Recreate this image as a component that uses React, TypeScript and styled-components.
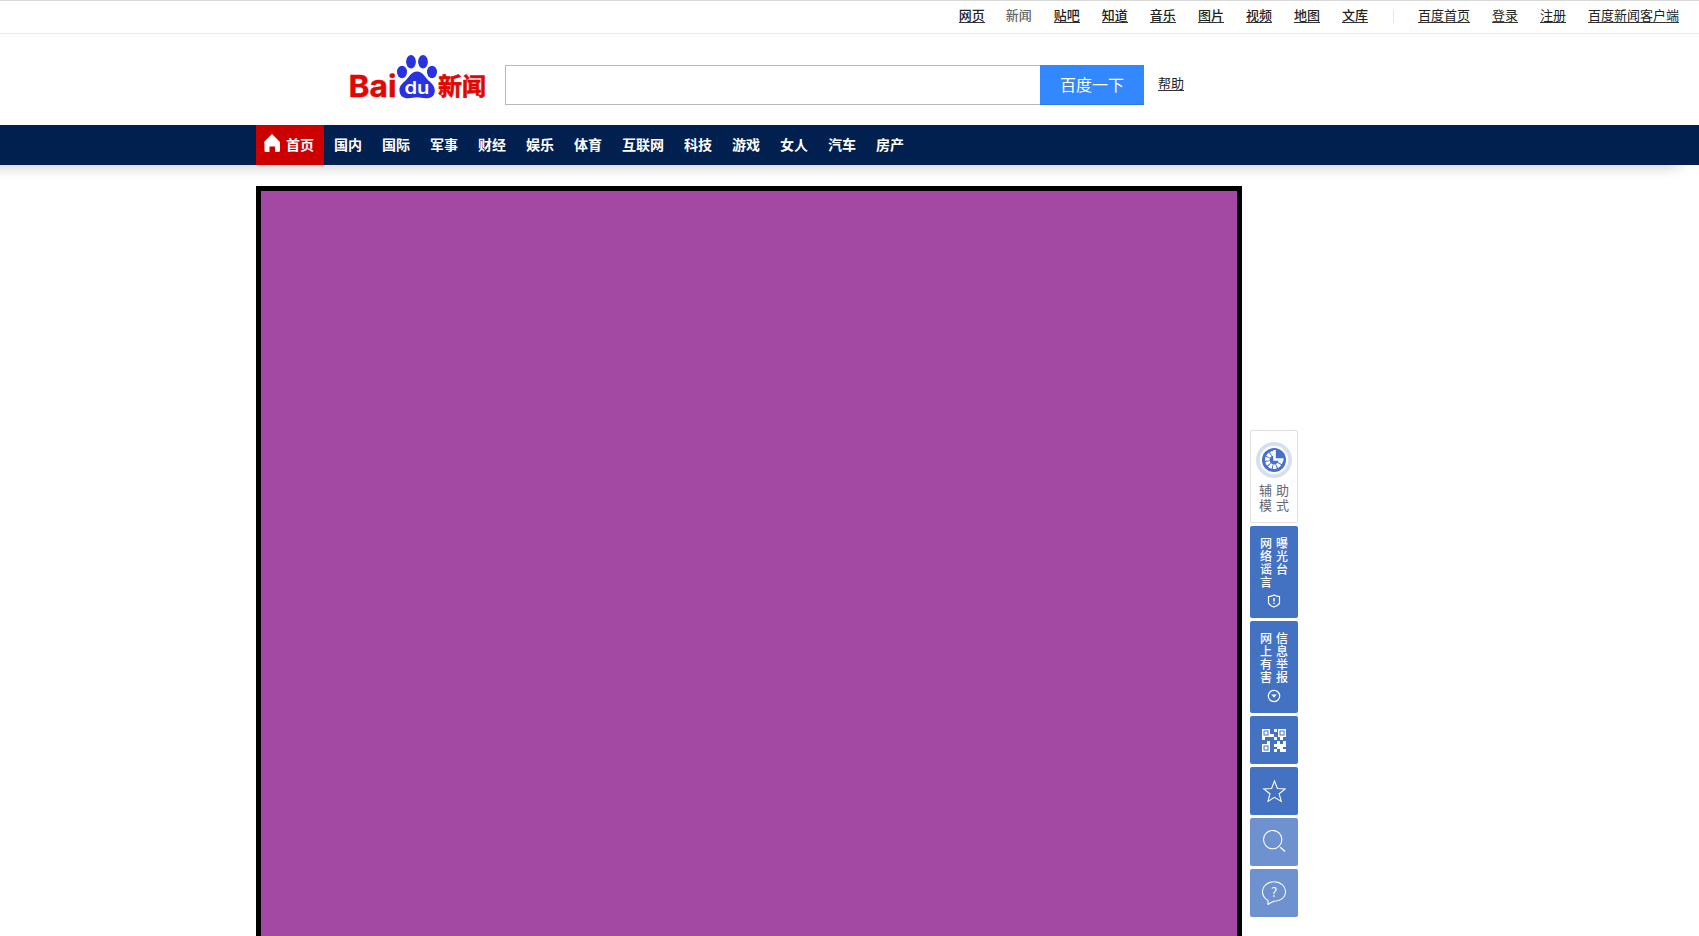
import React from "react";
import styled, { createGlobalStyle, css } from "styled-components";

const sans = `"Noto Sans CJK SC", sans-serif`;

const GlobalStyle = createGlobalStyle`
  body {
    margin: 0;
    background: #fff;
    color: #333;
    font: 13px/1 ${sans};
    overflow: hidden;
  }
  a { color: inherit; }
`;

const Page = styled.div`
  height: 936px;
  overflow: hidden;
  display: flex;
  flex-direction: column;
`;

const TopBar = styled.div`
  box-sizing: border-box;
  flex: none;
  height: 34px;
  padding: 0 20px 2px 0;
  border-top: 1px solid #d9d9d9;
  border-bottom: 1px solid #ebebeb;
  display: flex;
  justify-content: flex-end;
  align-items: center;
  gap: 22px;
`;

const TopLink = styled.a<{ $weight?: number; $current?: boolean }>`
  height: 14px;
  line-height: 11px;
  box-sizing: border-box;
  white-space: nowrap;
  font-weight: ${(p) => p.$weight ?? 400};
  color: ${(p) => (p.$current ? "#666" : "#222")};
  border-bottom: 1px solid ${(p) => (p.$current ? "transparent" : "#333")};
  &:first-child { margin-right: -1px; }
`;

const Divider = styled.span`
  width: 1px;
  height: 13px;
  margin: 0 2px 0 3px;
  background: #e6e6e6;
`;

const Header = styled.header`
  flex: none;
  height: 91px;
  box-sizing: border-box;
  padding: 21px 0 0 350px;
  display: flex;
  align-items: flex-start;
`;

const Logo = styled.svg`
  width: 136px;
  height: 46px;
  margin-right: 19px;
  overflow: visible;
`;

const SearchForm = styled.div`
  display: flex;
  align-items: center;
  margin-top: 10px;
`;

const SearchInput = styled.input`
  box-sizing: border-box;
  width: 535px;
  height: 40px;
  padding: 0 10px;
  border: 1px solid #b8b8b8;
  border-right: 0;
  border-radius: 0;
  outline: 0;
  font: 16px ${sans};
`;

const SearchButton = styled.button`
  width: 104px;
  height: 40px;
  padding: 0 0 2px;
  border: 0;
  border-bottom: 1px solid #2d78e0;
  background: #3388ff;
  color: #fff;
  font: 16px/1 ${sans};
`;

const HelpLink = styled(TopLink)`
  margin: 0 0 2px 14px;
`;

const Nav = styled.nav`
  flex: none;
  height: 40px;
  padding-left: 256px;
  display: flex;
  background: #01204f;
  box-shadow: -20px 2px 14px rgba(0, 0, 0, 0.2);
  clip-path: inset(0 0 -20px 0);
`;

const NavItem = styled.a<{ $active?: boolean }>`
  display: flex;
  align-items: center;
  padding: 0 10px 2px;
  color: #fff;
  font-size: 14px;
  font-weight: 700;
  white-space: nowrap;
  ${(p) =>
    p.$active &&
    css`
      width: 68px;
      box-sizing: border-box;
      padding: 0 0 2px 8px;
      gap: 6px;
      background: #cc0000;
    `}
`;

const HomeIcon = styled.svg`
  flex: none;
  width: 16px;
  height: 18px;
  margin-bottom: 2px;
`;

const Main = styled.main`
  display: flex;
  gap: 8px;
  padding: 21px 0 0 256px;
`;

const Panel = styled.section`
  box-sizing: border-box;
  flex: none;
  width: 986px;
  height: 900px;
  border: 5px solid #000;
  background: #a349a4;
`;

const Tools = styled.aside`
  display: flex;
  flex-direction: column;
  gap: 3px;
  padding-top: 244px;
  width: 48px;
`;

const AssistTile = styled.div`
  box-sizing: border-box;
  height: 93px;
  padding-top: 11px;
  border: 1px solid #e2e2e2;
  border-radius: 2px;
  background: #fff;
  color: #666673;
  display: flex;
  flex-direction: column;
  align-items: center;
  gap: 4px;
`;

const AssistLabel = styled.div`
  display: flex;
  gap: 4px;
  font-size: 13px;
  line-height: 15px;
`;

const ReportTile = styled.div`
  box-sizing: border-box;
  height: 92px;
  padding-top: 10px;
  border-radius: 2px;
  background: #4472c2;
  color: #fff;
  display: flex;
  flex-direction: column;
  align-items: center;
  gap: 6px;
`;

const ReportLabel = styled.div`
  display: flex;
  gap: 4px;
  font-size: 12px;
  font-weight: 500;
  line-height: 13px;
  height: 52px;
`;

const Column = styled.span`
  width: 1em;
  word-break: break-all;
`;

const IconTile = styled.div<{ $light?: boolean }>`
  height: 48px;
  border-radius: 2px;
  background: ${(p) => (p.$light ? "#6e91cf" : "#4472c2")};
  display: flex;
  align-items: center;
  justify-content: center;
`;

const Glyph = styled.svg`
  display: block;
  flex: none;
  fill: none;
  stroke: #fff;
`;

const services = ["网页", "新闻", "贴吧", "知道", "音乐", "图片", "视频", "地图", "文库"];
const accountLinks = ["百度首页", "登录", "注册", "百度新闻客户端"];
const channels = ["国内", "国际", "军事", "财经", "娱乐", "体育", "互联网", "科技", "游戏", "女人", "汽车", "房产"];

const BaiduLogo = () => (
  <Logo viewBox="0 0 136 46">
    <text x="-1.5" y="42" fill="#e10602" stroke="#e10602" strokeWidth="0.4" fontFamily="Inter, sans-serif" fontWeight="700" fontSize="30" textLength="48" lengthAdjust="spacingAndGlyphs">Bai</text>
    <g fill="#2932e1">
      <ellipse cx="52" cy="17" rx="5" ry="6.2" />
      <ellipse cx="61" cy="6.7" rx="4.9" ry="6.7" />
      <ellipse cx="73" cy="6.7" rx="4.9" ry="6.7" />
      <ellipse cx="82" cy="17" rx="5" ry="6.2" />
      <path d="M67 16.5C61 16.5 59.5 22 55 26C51 29.5 49 32 49.5 36C50 41 53 43.3 58 43.3C62 43.3 63.5 42.3 67 42.3C70.5 42.3 72 43.3 76 43.3C81.5 43.3 84.5 41 84.8 36C85 31.5 82.5 29 79 26C74.5 22 73 16.5 67 16.5Z" />
    </g>
    <text x="54.5" y="39.3" fill="#fff" fontFamily="Inter, sans-serif" fontWeight="600" fontSize="17" textLength="25" lengthAdjust="spacingAndGlyphs">du</text>
    <text x="88" y="39.8" fill="#e10602" fontFamily={sans} fontWeight="700" stroke="#e10602" strokeWidth="0.6" fontSize="24" textLength="48" lengthAdjust="spacingAndGlyphs">新闻</text>
  </Logo>
);

const AssistIcon = () => (
  <Glyph width="36" height="36" viewBox="0 0 36 36">
    <g stroke="none">
      <circle cx="18" cy="18" r="18" fill="#d5def2" />
      <circle cx="18" cy="18" r="14.3" fill="#fff" />
      <circle cx="18" cy="18" r="12" fill="#466fd0" />
    </g>
    <path d="M18 11.3A6.7 6.7 0 1 0 24.7 18" strokeWidth="4.6" strokeDasharray="3.1 0.9" />
    <path d="M18.5 8V17.5H27.5" strokeWidth="2.6" />
  </Glyph>
);

const QrIcon = () => (
  <Glyph width="24" height="23" viewBox="0 0 24 23">
    <path d="M.75 .75h6.5v6.5h-6.5zM16.75 .75h6.5v6.5h-6.5zM.75 15.75h6.5v6.500h-6.5z" strokeWidth="1.5" />
    <g fill="#fff" stroke="none">
      <path d="M2.500 2.500h3v3h-3zM18.500 2.500h3v3h-3zM2.500 17.500h3v3h-3z" />
      <path d="M12 0h3v3h-3zM8 5h3v3h-3zM11 5h1v3h-1zM0 8h3v3h-3zM12 8h3v3h-3zM18 8h3v3h-3zM5 12h3v3h-3zM12 15h3v3h-3zM15 12h3v3h-3zM21 12h3v3h-3zM15 15h9v3h-9zM12 20h3v3h-3zM15 18h3v2h-3zM18 18h3v5h-3zM21 20h3v3h-3z" />
    </g>
  </Glyph>
);

export default function App() {
  return (
    <Page>
      <GlobalStyle />
      <TopBar>
        {services.map((s) => (
          <TopLink key={s} $weight={500} $current={s === "新闻"}>{s}</TopLink>
        ))}
        <Divider />
        {accountLinks.map((s) => (
          <TopLink key={s}>{s}</TopLink>
        ))}
      </TopBar>
      <Header>
        <BaiduLogo />
        <SearchForm>
          <SearchInput />
          <SearchButton>百度一下</SearchButton>
          <HelpLink>帮助</HelpLink>
        </SearchForm>
      </Header>
      <Nav>
        <NavItem $active>
          <HomeIcon viewBox="0 0 16 18">
            <path d="M8 0L16 8V16.5Q16 18 14.5 18H11V12.5H5.5V18H1.5Q.5 18 .5 16.5V9.5L0 8Z" fill="#fff" />
          </HomeIcon>
          首页
        </NavItem>
        {channels.map((c) => (
          <NavItem key={c}>{c}</NavItem>
        ))}
      </Nav>
      <Main>
        <Panel />
        <Tools>
          <AssistTile>
            <AssistIcon />
            <AssistLabel>
              <Column>辅模</Column>
              <Column>助式</Column>
            </AssistLabel>
          </AssistTile>
          <ReportTile>
            <ReportLabel>
              <Column>网络谣言</Column>
              <Column>曝光台</Column>
            </ReportLabel>
            <Glyph width="14" height="14" viewBox="0 0 14 14" strokeWidth="1.2">
              <path d="M1.5 2.5Q4.5 2.5 7 1Q9.5 2.5 12.5 2.5V9Q12 11 7 13Q2 11 1.5 9Z" />
              <path d="M7 4V7.5M7 8.8V10" strokeWidth="1.5" />
            </Glyph>
          </ReportTile>
          <ReportTile>
            <ReportLabel>
              <Column>网上有害</Column>
              <Column>信息举报</Column>
            </ReportLabel>
            <Glyph width="14" height="14" viewBox="0 0 14 14" strokeWidth="1.2">
              <circle cx="7" cy="7" r="5.7" />
              <path d="M4.3 5.5H9.7L7 8.8Z" fill="#fff" stroke="none" />
            </Glyph>
          </ReportTile>
          <IconTile>
            <QrIcon />
          </IconTile>
          <IconTile>
            <Glyph width="24" height="24" viewBox="0 0 24 24" strokeWidth="1.1">
              <path d="M12.5 2L15.4 9.5L23.2 9.9L17.2 14.8L19.2 22.4L12.5 18.3L6 22.4L7.9 14.8L1.8 9.9L9.6 9.5Z" />
            </Glyph>
          </IconTile>
          <IconTile $light>
            <Glyph width="24" height="24" viewBox="0 0 24 24" strokeWidth="1.1">
              <circle cx="10.7" cy="9.6" r="9.2" />
              <path d="M18.3 17.2L23 21.5" strokeWidth="1.4" />
            </Glyph>
          </IconTile>
          <IconTile $light>
            <Glyph width="24" height="24" viewBox="0 0 24 24" strokeWidth="1.1">
              <path d="M6 19.5C2.5 17.5 .5 14.5 .5 10.7C.5 5 5.5 .7 12 .7S23.500 5 23.500 10.7S18.500 20.300 12 20.300Q8.500 21.500 6 23.500Z" />
              <text x="12" y="16" textAnchor="middle" fill="#fff" stroke="none" fontFamily={sans} fontSize="13">?</text>
            </Glyph>
          </IconTile>
        </Tools>
      </Main>
    </Page>
  );
}
